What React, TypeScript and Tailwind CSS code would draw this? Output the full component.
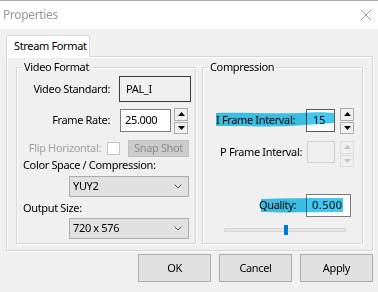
import React from "react";

const etched = "border border-[#d5d5d5] shadow-[inset_1px_1px_0_#ffffff,1px_1px_0_#ffffff]";

function Spin({ disabled = false }: { disabled?: boolean }) {
  const c = disabled ? "#c4c4c4" : "#000000";
  const b = disabled ? "border-[#dcdcdc]" : "border-[#adadad]";
  return (
    <div className="flex flex-col gap-[1px]">
      <div className={`w-[14px] h-[13px] border ${b} bg-[#f0f0f0] flex items-center justify-center`}>
        <svg width="7" height="4" viewBox="0 0 7 4">
          <path d="M0 4 L3.5 0 L7 4 Z" fill={c} />
        </svg>
      </div>
      <div className={`w-[14px] h-[12px] border ${b} bg-[#f0f0f0] flex items-center justify-center`}>
        <svg width="7" height="4" viewBox="0 0 7 4">
          <path d="M0 0 L3.5 4 L7 0 Z" fill={c} />
        </svg>
      </div>
    </div>
  );
}

function Combo({ value }: { value: string }) {
  return (
    <div className="ml-[52px] w-[120px] h-[21px] border border-[#adadad] bg-[#e1e1e1] flex items-center pl-[3px] pr-[6px]">
      <span className="flex-1">{value}</span>
      <svg width="8" height="5" viewBox="0 0 8 5">
        <path d="M0.5 0.5 L4 4 L7.5 0.5" stroke="#555555" fill="none" strokeWidth="1" />
      </svg>
    </div>
  );
}

function Group({ title, children }: { title: string; children: React.ReactNode }) {
  return (
    <div className={`${etched} h-[177px] flex flex-col`}>
      <span className="self-start ml-[5px] px-[2px] -mt-[9px] h-[16px] leading-[16px] bg-[#f0f0f0]">
        {title}
      </span>
      {children}
    </div>
  );
}

export default function App() {
  return (
    <div className="w-[378px] h-[292px] overflow-hidden bg-[#f0f0f0] border-t border-[#aaaaaa] text-[11px] tracking-[-0.35px] whitespace-nowrap text-black font-['Noto_Sans',sans-serif] relative">
      {/* title bar */}
      <div className="h-[28px] bg-white flex items-center pl-[3px] pr-[7px]">
        <span className="flex-1 text-[12px] text-[#9a9a9a]">Properties</span>
        <svg width="10" height="10" viewBox="0 0 10 10">
          <path d="M0 0 L10 10 M10 0 L0 10" stroke="#9a9a9a" strokeWidth="1" />
        </svg>
      </div>

      <div className="pl-[6px] pr-[5px] pt-[6px]">
        {/* tab strip */}
        <div className="flex">
          <div className="w-[84px] h-[22px] border border-b-0 border-[#d9d9d9] bg-white flex items-center pl-[7px] relative z-10 -mb-[1px]">
            Stream Format
          </div>
        </div>

        {/* tab page */}
        <div className={`${etched} h-[195px] flex gap-[6px] pl-[9px] pr-[8px] pt-[10px]`}>
          <div className="w-[180px]">
            <Group title="Video Format">
              <div className="mt-[1px] h-[26px] flex items-center">
                <span className="w-[93px] text-right">Video Standard:</span>
                <div className="ml-[9px] w-[72px] h-[26px] border border-[#3c3c3c] flex items-center pl-[6px]">
                  PAL_I
                </div>
              </div>
              <div className="mt-[7px] h-[23px] flex items-center">
                <span className="w-[93px] text-right">Frame Rate:</span>
                <div className="ml-[10px] w-[51px] h-[23px] border border-[#7a7a7a] bg-white flex items-center pl-[4px]">
                  25.000
                </div>
                <div className="ml-[3px]">
                  <Spin />
                </div>
              </div>
              <div className="mt-[8px] h-[16px] flex items-center text-[#a0a0a0]">
                <span className="w-[84px] text-right">Flip Horizontal:</span>
                <div className="ml-[6px] w-[13px] h-[13px] border border-[#c6c6c6] bg-white" />
                <div className="ml-[8px] w-[61px] h-[17px] border border-[#bfbfbf] bg-[#cccccc] flex items-center justify-center text-[#8a8a8a]">
                  Snap Shot
                </div>
              </div>
              <div className="mt-[1px] h-[16px] leading-[16px] pl-[6px]">Color Space / Compression:</div>
              <div className="mt-[3px]">
                <Combo value="YUY2" />
              </div>
              <div className="mt-[3px] h-[16px] leading-[16px] pl-[6px]">Output Size:</div>
              <div className="mt-[2px]">
                <Combo value="720 x 576" />
              </div>
            </Group>
          </div>

          <div className="w-[161px]">
            <Group title="Compression">
              <div className="mt-[34px] h-[23px] flex items-center">
                <span className="w-[92px] text-right">I Frame Interval:</span>
                <div className="ml-[11px] w-[29px] h-[23px] border border-[#5a5a5a] bg-white flex items-center pl-[6px]">
                  15
                </div>
                <div className="ml-[5px]">
                  <Spin />
                </div>
              </div>
              <div className="mt-[9px] h-[22px] flex items-center">
                <span className="w-[99px] text-right">P Frame Interval:</span>
                <div className="ml-[5px] w-[28px] h-[22px] border border-[#d0d0d0] bg-[#f0f0f0]" />
                <div className="ml-[5px] mt-[3px]">
                  <Spin disabled />
                </div>
              </div>
              <div className="mt-[31px] h-[23px] flex items-center">
                <span className="w-[93px] text-right">Quality:</span>
                <div className="ml-[10px] w-[45px] h-[23px] border border-[#7a7a7a] bg-white flex items-center pl-[5px] tracking-[0.5px]">
                  0.500
                </div>
              </div>
              <div className="mt-[8px] h-[10px] flex items-center ml-[21px]">
                <div className="w-[122px] h-[4px] bg-[#e7e7e7] border border-[#d6d6d6] flex items-center">
                  <div className="ml-[59px] w-[4px] h-[10px] bg-[#0078d7] shrink-0" />
                </div>
              </div>
            </Group>
          </div>
        </div>

        {/* buttons */}
        <div className="mt-[3px] flex justify-end gap-[8px]">
          {["OK", "Cancel", "Apply"].map((t) => (
            <div
              key={t}
              className="w-[73px] h-[28px] border border-[#adadad] bg-[#e1e1e1] flex items-center justify-center"
            >
              {t}
            </div>
          ))}
        </div>
      </div>

      {/* highlighter annotations drawn over the dialog */}
      <svg
        className="absolute left-0 top-0 pointer-events-none mix-blend-multiply"
        width="378"
        height="292"
        viewBox="0 0 378 292"
      >
        <path
          d="M216 112 C240 111 270 113 300 112 C315 111 326 111 334 112 L334 122 C320 123 305 124 290 125 C260 126 235 125 216 125 Z"
          fill="#40c8f0"
        />
        <path
          d="M261 198 C285 197 315 197 343 197 L343 211 C315 211 285 212 261 211 Z"
          fill="#40c8f0"
        />
      </svg>
    </div>
  );
}
